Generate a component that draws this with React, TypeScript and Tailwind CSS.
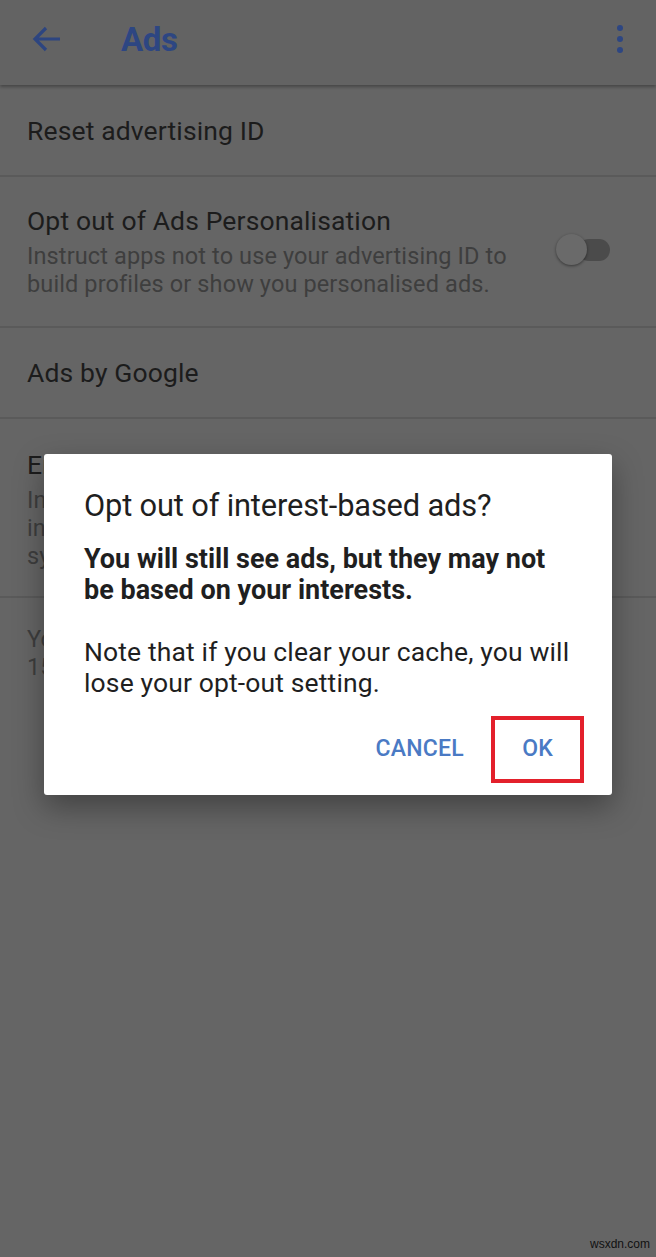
import React from "react";

const FONT = { fontFamily: "Roboto, 'Noto Sans', sans-serif" };

function Divider() {
  return <div className="h-[2px] bg-[#5a5a5a]" />;
}

function Toggle() {
  return (
    <div className="relative h-[32px] w-[56px] shrink-0">
      <div className="absolute left-[22px] top-[5px] h-[22px] w-[32px] rounded-full bg-[#4b4b4b]" />
      <div className="absolute left-0 top-0 h-[31px] w-[31px] rounded-full bg-[#6a6a6a] shadow-[0_1px_3px_rgba(0,0,0,0.45)]" />
    </div>
  );
}

function Dialog() {
  return (
    <div className="absolute left-[44px] top-[454px] w-[568px] rounded-[3px] bg-white shadow-[0_12px_30px_rgba(0,0,0,0.35)]">
      <div className="px-[40px] pt-[35px]">
        <h2 className="text-[30.8px] leading-[34px] tracking-[-0.005em] text-[#1f1f1f]">
          Opt out of interest-based ads?
        </h2>
        <p className="mt-[21px] pr-[10px] text-[27px] font-bold leading-[31px] text-[#1f1f1f]">
          You will still see ads, but they may not be based on your interests.
        </p>
        <p className="mt-[30px] text-[26.5px] leading-[31px] tracking-[0.005em] text-[#1f1f1f]">
          Note that if you clear your cache, you will lose your opt-out setting.
        </p>
      </div>
      <div className="flex items-center justify-end gap-[27px] pb-[12px] pr-[28px] pt-[18px]">
        <button className="text-[23px] font-medium tracking-[0.01em] text-[#4a7ac4]">CANCEL</button>
        <button className="flex h-[67px] w-[93px] items-center justify-center border-[4px] border-[#e3202b] text-[23px] font-medium text-[#4a7ac4]">
          OK
        </button>
      </div>
    </div>
  );
}

export default function App() {
  return (
    <div className="relative h-[1257px] w-[656px] overflow-hidden bg-[#656565]" style={FONT}>
      {/* app bar */}
      <header className="relative z-10 flex h-[85px] items-center bg-[#636363] shadow-[0_2px_3px_rgba(0,0,0,0.3)]">
        <svg width="30" height="28" viewBox="0 0 30 28" className="ml-[32px] mb-[8px]">
          <path d="M28 14H4M14 3L3 14l11 11" fill="none" stroke="#2d4580" strokeWidth="3.2" />
        </svg>
        <h1 className="ml-[59px] mb-[6px] text-[33px] font-bold tracking-[-0.01em] text-[#2d4682]">Ads</h1>
        <div className="ml-auto mr-[33px] mb-[8px] flex flex-col gap-[5px]">
          <span className="h-[6px] w-[6px] rounded-full bg-[#2d4682]" />
          <span className="h-[6px] w-[6px] rounded-full bg-[#2d4682]" />
          <span className="h-[6px] w-[6px] rounded-full bg-[#2d4682]" />
        </div>
      </header>

      <div className="text-[#1c1c1c]">
        <div className="flex h-[90px] items-center px-[27px] pt-[2px]">
          <span className="text-[26.5px] tracking-[0.005em]">Reset advertising ID</span>
        </div>
        <Divider />
        <div className="flex h-[149px] items-center justify-between pl-[27px] pr-[44px]">
          <div className="pb-[2px]">
            <div className="text-[26.5px] leading-[34px] tracking-[0.005em]">Opt out of Ads Personalisation</div>
            <div className="mt-[4px] text-[23.5px] leading-[28px] tracking-[0.005em] text-[#3e3e3e]">
              Instruct apps not to use your advertising ID to
              <br />
              build profiles or show you personalised ads.
            </div>
          </div>
          <div className="mt-[-4px]">
            <Toggle />
          </div>
        </div>
        <Divider />
        <div className="flex h-[89px] items-center px-[27px]">
          <span className="text-[26.5px] tracking-[0.005em]">Ads by Google</span>
        </div>
        <Divider />
        <div className="flex h-[177px] flex-col justify-center px-[27px] pt-[2px]">
          <div className="text-[26.5px] leading-[34px] tracking-[0.005em]">Enable debug logging for ads</div>
          <div className="mt-[4px] text-[23.5px] leading-[28px] tracking-[0.005em] text-[#3e3e3e]">
            Instruct ads to log debug information
            <br />
            into the Android
            <br />
            system log.
          </div>
        </div>
        <Divider />
        <div className="px-[27px] pt-[27px] text-[23.5px] leading-[28px] tracking-[0.005em] text-[#3e3e3e]">
          Your advertising ID:
          <br />
          15c2d7e8-4a91-4f3b-9e6d-2b8c0a7f51d3
        </div>
      </div>

      <Dialog />

      <div className="absolute bottom-[4px] right-[6px] text-[12px] text-[#111]" style={{ fontFamily: "'Liberation Sans', sans-serif" }}>
        wsxdn.com
      </div>
    </div>
  );
}
